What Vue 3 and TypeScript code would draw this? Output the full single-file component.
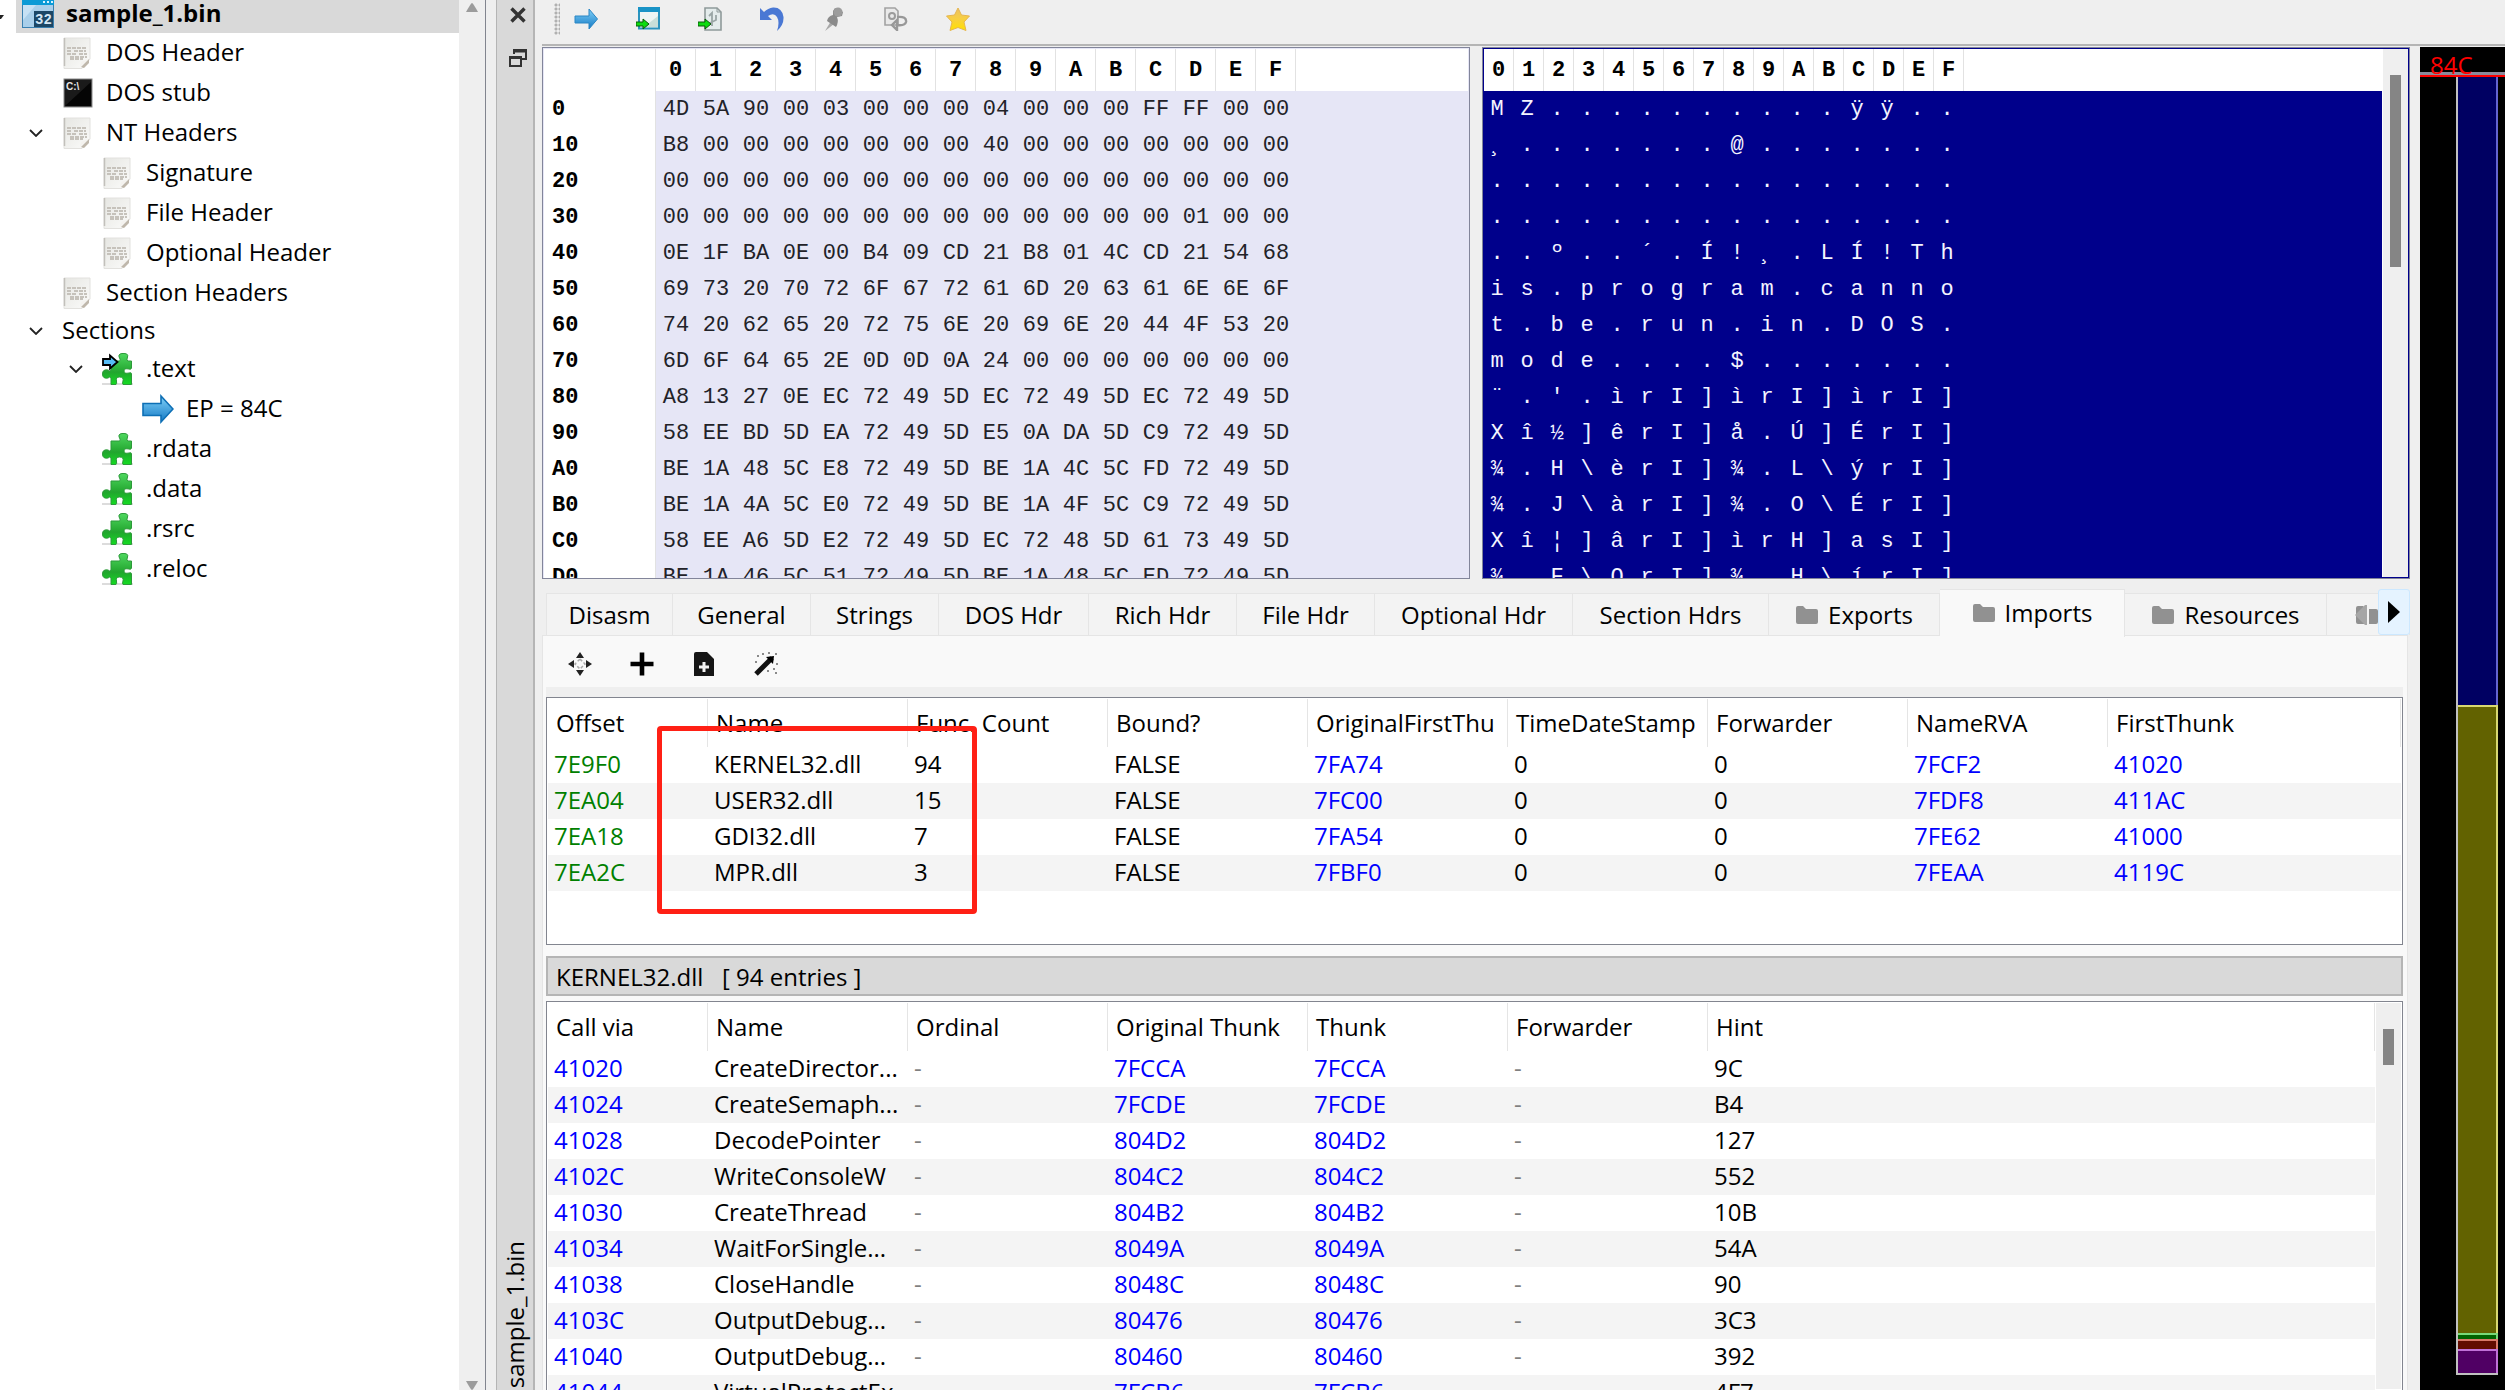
<script setup lang="ts">
interface TreeNode {
  label: string
  depth: number
  icon: 'app' | 'doc' | 'console' | 'puzzle' | 'entry' | 'arrow' | 'none'
  open?: boolean
}

const nodes: TreeNode[] = [
  { label: 'DOS Header', depth: 1, icon: 'doc' },
  { label: 'DOS stub', depth: 1, icon: 'console' },
  { label: 'NT Headers', depth: 1, icon: 'doc', open: true },
  { label: 'Signature', depth: 2, icon: 'doc' },
  { label: 'File Header', depth: 2, icon: 'doc' },
  { label: 'Optional Header', depth: 2, icon: 'doc' },
  { label: 'Section Headers', depth: 1, icon: 'doc' },
  { label: 'Sections', depth: 1, icon: 'none', open: true },
  { label: '.text', depth: 2, icon: 'entry', open: true },
  { label: 'EP = 84C', depth: 3, icon: 'arrow' },
  { label: '.rdata', depth: 2, icon: 'puzzle' },
  { label: '.data', depth: 2, icon: 'puzzle' },
  { label: '.rsrc', depth: 2, icon: 'puzzle' },
  { label: '.reloc', depth: 2, icon: 'puzzle' },
]

const digits: string[] = '0123456789ABCDEF'.split('')

const dump: string[][] = [
  '4D 5A 90 00 03 00 00 00 04 00 00 00 FF FF 00 00',
  'B8 00 00 00 00 00 00 00 40 00 00 00 00 00 00 00',
  '00 00 00 00 00 00 00 00 00 00 00 00 00 00 00 00',
  '00 00 00 00 00 00 00 00 00 00 00 00 00 01 00 00',
  '0E 1F BA 0E 00 B4 09 CD 21 B8 01 4C CD 21 54 68',
  '69 73 20 70 72 6F 67 72 61 6D 20 63 61 6E 6E 6F',
  '74 20 62 65 20 72 75 6E 20 69 6E 20 44 4F 53 20',
  '6D 6F 64 65 2E 0D 0D 0A 24 00 00 00 00 00 00 00',
  'A8 13 27 0E EC 72 49 5D EC 72 49 5D EC 72 49 5D',
  '58 EE BD 5D EA 72 49 5D E5 0A DA 5D C9 72 49 5D',
  'BE 1A 48 5C E8 72 49 5D BE 1A 4C 5C FD 72 49 5D',
  'BE 1A 4A 5C E0 72 49 5D BE 1A 4F 5C C9 72 49 5D',
  '58 EE A6 5D E2 72 49 5D EC 72 48 5D 61 73 49 5D',
  'BE 1A 46 5C 51 72 49 5D BE 1A 48 5C ED 72 49 5D',
].map((row) => row.split(' '))

const offsetOf = (row: number): string => (row * 16).toString(16).toUpperCase()

const toChar = (byte: string): string => {
  const code = parseInt(byte, 16)
  const printable = (code > 0x20 && code < 0x7f) || code > 0xa0
  return printable ? String.fromCharCode(code) : '.'
}

interface Tab {
  label: string
  width: number
  folder?: boolean
  active?: boolean
}

const tabs: Tab[] = [
  { label: 'Disasm', width: 127 },
  { label: 'General', width: 138 },
  { label: 'Strings', width: 128 },
  { label: 'DOS Hdr', width: 150 },
  { label: 'Rich Hdr', width: 148 },
  { label: 'File Hdr', width: 138 },
  { label: 'Optional Hdr', width: 198 },
  { label: 'Section Hdrs', width: 196 },
  { label: 'Exports', width: 171, folder: true },
  { label: 'Imports', width: 185, folder: true, active: true },
  { label: 'Resources', width: 202, folder: true },
]

const importHeads = ['Offset', 'Name', 'Func. Count', 'Bound?', 'OriginalFirstThu', 'TimeDateStamp', 'Forwarder', 'NameRVA', 'FirstThunk']
const importTones = ['green', '', '', '', 'blue', '', '', 'blue', 'blue']
const imports: string[][] = [
  ['7E9F0', 'KERNEL32.dll', '94', 'FALSE', '7FA74', '0', '0', '7FCF2', '41020'],
  ['7EA04', 'USER32.dll', '15', 'FALSE', '7FC00', '0', '0', '7FDF8', '411AC'],
  ['7EA18', 'GDI32.dll', '7', 'FALSE', '7FA54', '0', '0', '7FE62', '41000'],
  ['7EA2C', 'MPR.dll', '3', 'FALSE', '7FBF0', '0', '0', '7FEAA', '4119C'],
]

const entryHeads = ['Call via', 'Name', 'Ordinal', 'Original Thunk', 'Thunk', 'Forwarder', 'Hint']
const entryTones = ['blue', '', 'dash', 'blue', 'blue', 'dash', '']
const entries: string[][] = [
  ['41020', 'CreateDirector...', '7FCCA', '9C'],
  ['41024', 'CreateSemaph...', '7FCDE', 'B4'],
  ['41028', 'DecodePointer', '804D2', '127'],
  ['4102C', 'WriteConsoleW', '804C2', '552'],
  ['41030', 'CreateThread', '804B2', '10B'],
  ['41034', 'WaitForSingle...', '8049A', '54A'],
  ['41038', 'CloseHandle', '8048C', '90'],
  ['4103C', 'OutputDebug...', '80476', '3C3'],
  ['41040', 'OutputDebug...', '80460', '392'],
  ['41044', 'VirtualProtectEx', '7FCB6', '4F7'],
].map(([via, name, thunk, hint]) => [via, name, '-', thunk, thunk, '-', hint])

// relative heights, each without its 2px top edge
const segments = [
  { name: 'blue', size: 628 },
  { name: 'olive', size: 626 },
  { name: 'lime', size: 4 },
  { name: 'red', size: 8 },
  { name: 'purple', size: 22 },
]
</script>

<template>
  <div class="window">
    <svg class="defs" aria-hidden="true">
      <defs>
        <linearGradient id="g-arrow" x1="0" y1="0" x2="0" y2="1">
          <stop offset="0" stop-color="#7fd0f8" />
          <stop offset="1" stop-color="#1479c4" />
        </linearGradient>
        <linearGradient id="g-puzzle" x1="0" y1="0" x2="0" y2="1">
          <stop offset="0" stop-color="#4fd860" />
          <stop offset="0.6" stop-color="#22a52e" />
          <stop offset="1" stop-color="#14dc22" />
        </linearGradient>
        <linearGradient id="g-page" x1="0" y1="0" x2="1" y2="1">
          <stop offset="0" stop-color="#e6e6e2" />
          <stop offset="1" stop-color="#fbfbfa" />
        </linearGradient>
        <linearGradient id="g-star" x1="0" y1="0" x2="0" y2="1">
          <stop offset="0" stop-color="#ecc062" />
          <stop offset="0.5" stop-color="#f8d040" />
          <stop offset="1" stop-color="#ffe000" />
        </linearGradient>
        <symbol id="i-arrow" viewBox="0 0 32 28">
          <path d="M1 8.500H19V1L31 14 19 27V20.500H1Z" fill="url(#g-arrow)" stroke="#0d6fb5" stroke-width="1.600" />
        </symbol>
        <symbol id="i-puzzle" viewBox="0 0 32 32">
          <path d="M0 30H31V32H0Z" fill="#dcdcdc" />
          <path d="M9 8H17Q19 8 18 6Q15 1 20 0.500Q27 0 25.500 4Q24 8 26 8H29.500V15Q29 17 27 16Q22 15 22 18Q22 21 27 20Q29.500 19 29.500 21V31.500H21Q20 30 21 28Q22 24 17.500 24Q13.500 24 14.500 28Q15 31 14 31.500H9V25Q8 23 6 25Q0.500 26 0.500 21Q0.500 16 6 17Q8 19 9 17Z" fill="url(#g-puzzle)" stroke="#2d9a3a" stroke-width="1" />
        </symbol>
      </defs>
    </svg>

    <aside class="tree">
      <ul class="tree-list">
        <li class="node root">
          <svg class="root-tick" viewBox="0 0 4 6"><path d="M0 1H4L1 5H0Z" fill="#222" /></svg>
          <span class="root-body">
            <svg class="app-icon" viewBox="0 0 32 28">
              <rect x="0.500" y="-3" width="31" height="30.500" fill="#a9cfea" stroke="#3a80b0" />
              <path d="M1 5L14 5 1 20Z" fill="#c6e1f4" />
              <rect x="0" y="-3" width="32" height="8" fill="#0b9ad6" />
              <path d="M21 1H23V3H21ZM25 1H27V3H25ZM29 1H31V3H29Z" fill="#d8f2ff" />
              <rect x="12" y="11" width="19" height="16" fill="#1c4766" />
              <text x="13" y="24" font-family="Liberation Mono, monospace" font-weight="700" font-size="14" fill="#d4e6f4">32</text>
            </svg>
            <strong>sample_1.bin</strong>
          </span>
        </li>
        <li v-for="node in nodes" :key="node.label" class="node" :class="['depth-' + node.depth, { bare: node.icon === 'none' }]">
          <span class="twist">
            <svg v-if="node.open" viewBox="0 0 14 8"><path d="M1 1L7 7 13 1" fill="none" stroke="#222" stroke-width="1.800" /></svg>
          </span>
          <svg v-if="node.icon === 'doc'" class="node-icon" viewBox="0 0 32 32">
            <path d="M2 1H28V22L20 31.500H2Z" fill="url(#g-page)" stroke="#e2e1de" />
            <path d="M2.500 1V29" stroke="#c2c0bb" stroke-width="1.500" />
            <path d="M5 11H24M5 14H9M12 14H24M5 17H15M17 17H25M8 20H25M8 22H21" stroke="#c6c2bb" stroke-width="1.800" stroke-dasharray="4 1" />
            <path d="M19 30L27 22 27 26 22 31Z" fill="#bfb7ab" />
            <path d="M18 30L19 25 26 22Z" fill="#f4f2ee" />
          </svg>
          <svg v-else-if="node.icon === 'console'" class="node-icon" viewBox="0 0 32 32">
            <rect x="2" y="2" width="28" height="28" fill="#1a1a1a" stroke="#8a8a8a" />
            <path d="M29 5V29H3Z" fill="#050505" />
            <text x="4" y="13" font-family="Liberation Sans, sans-serif" font-weight="700" font-size="10" fill="#e6e6e6">C:\</text>
          </svg>
          <svg v-else-if="node.icon === 'puzzle'" class="node-icon"><use href="#i-puzzle" /></svg>
          <svg v-else-if="node.icon === 'entry'" class="node-icon" viewBox="0 0 32 32">
            <use href="#i-puzzle" />
            <path d="M1 6H8V2.500L15.500 9 8 15.500V12H1Z" fill="#57bdf6" stroke="#000" stroke-width="1.800" />
          </svg>
          <svg v-else-if="node.icon === 'arrow'" class="node-icon"><use href="#i-arrow" /></svg>
          <span class="node-label">{{ node.label }}</span>
        </li>
      </ul>
      <div class="tree-scroll">
        <svg viewBox="0 0 12 9"><path d="M6 0Q7 0 12 9H0Q5 0 6 0Z" fill="#9c9c9c" /></svg>
        <svg viewBox="0 0 12 9"><path d="M6 9Q5 9 0 0H12Q7 9 6 9Z" fill="#9c9c9c" /></svg>
      </div>
    </aside>

    <div class="dock">
      <button class="dock-button" aria-label="Close">
        <svg width="16" height="16" viewBox="0 0 16 16"><path d="M1.500 1.500L14.500 14.500M14.500 1.500L1.500 14.500" stroke="#333" stroke-width="3.400" /></svg>
      </button>
      <button class="dock-button" aria-label="Float">
        <svg width="18" height="18" viewBox="0 0 18 18"><path d="M5 5V1H17V10H12" fill="none" stroke="#333" stroke-width="2" /><path d="M5 2H17" stroke="#333" stroke-width="3" /><path d="M1 8H12V17H1Z" fill="#dadada" stroke="#333" stroke-width="2" /><path d="M1 8.500H12" stroke="#333" stroke-width="3" /></svg>
      </button>
      <span class="dock-title">sample_1.bin</span>
    </div>

    <main class="main">
      <div class="toolbar">
        <span class="grip"></span>
        <button aria-label="Go to"><svg viewBox="0 0 24 24"><path d="M1 9H15V2L23.500 12 15 22V16H1Z" fill="url(#g-arrow)" stroke="#2a86c4" /></svg></button>
        <button aria-label="Load file">
          <svg viewBox="0 0 24 24"><rect x="3" y="1.500" width="20" height="20" fill="#eef5f3" stroke="#2c93bd" stroke-width="2" /><rect x="2" y="0" width="22" height="5" fill="#1993c6" /><path d="M8 20L22 9V20Z" fill="#c9dfd9" /><path d="M0 15H7V12L13 17 7 22V19H0Z" fill="#0ddc10" stroke="#0a5a0a" /></svg>
        </button>
        <button aria-label="Save page">
          <svg viewBox="0 0 24 24"><path d="M7 1H19L23 5V23H7Z" fill="#e4ecec" stroke="#8f9a9a" stroke-width="1.600" /><path d="M11 9L14 6V19M18 8V13L12 16" fill="none" stroke="#9aa6a6" stroke-width="1.800" /><path d="M19 1V5H23" fill="none" stroke="#8f9a9a" /><path d="M0 15H7V12L13 17 7 22V19H0Z" fill="#0ddc10" stroke="#0a5a0a" /></svg>
        </button>
        <button aria-label="Undo"><svg viewBox="0 0 24 24"><path d="M0 1V13H12L8 9Q14 5 17 10Q20 15 17 24Q24 18 23.500 10Q22 0 13 0.500Q8 1 4 5Z" fill="#4a78d4" /></svg></button>
        <button aria-label="Pin"><svg viewBox="0 0 24 24"><path d="M3 24L9 14 12 17Z" fill="#a9a9a9" /><path d="M13 1L21 5 20 9 15 10Q17 15 14 20L5 14Q6 9 11 8L11 4Z" fill="#8b8b8b" /><circle cx="16" cy="5" r="4.500" fill="#9c9c9c" /></svg></button>
        <button aria-label="Copy"><svg viewBox="0 0 24 24"><path d="M1 1H11L14 4V18H1Z" fill="#e9e9e9" stroke="#a2a2a2" stroke-width="1.600" /><circle cx="8" cy="9" r="3" fill="none" stroke="#9b9b9b" stroke-width="2" /><path d="M13 10Q23 9 22 15Q21 19 13 18M13 13L8 18 13 23Z" fill="none" stroke="#989898" stroke-width="2.400" /></svg></button>
        <button aria-label="Favourite"><svg viewBox="0 0 24 24"><path d="M12 1L15.500 8 23.500 9 18 15 20 23.500 12 20.500 4 23.500 6 15 0.500 9 8.500 8Z" fill="url(#g-star)" stroke="#e5b650" /></svg></button>
      </div>

      <div class="work">
        <div class="center">
          <div class="dumps">
            <section class="pane hex">
              <table class="hex-table">
                <thead>
                  <tr><th class="offset"></th><th v-for="d in digits" :key="d" class="digit">{{ d }}</th><th></th></tr>
                </thead>
                <tbody>
                  <tr v-for="(row, r) in dump" :key="r">
                    <th class="offset">{{ offsetOf(r) }}</th>
                    <td v-for="(byte, c) in row" :key="c">{{ byte }}</td>
                    <td></td>
                  </tr>
                </tbody>
              </table>
            </section>
            <section class="pane ascii">
              <table class="ascii-table">
                <thead>
                  <tr><th v-for="d in digits" :key="d" class="digit">{{ d }}</th><th></th></tr>
                </thead>
                <tbody>
                  <tr v-for="(row, r) in dump" :key="r">
                    <td v-for="(byte, c) in row" :key="c">{{ toChar(byte) }}</td>
                    <td></td>
                  </tr>
                </tbody>
              </table>
              <div class="scroll"><span class="thumb tall"></span></div>
            </section>
          </div>

          <div class="tabs">
            <button v-for="tab in tabs" :key="tab.label" class="tab" :class="{ active: tab.active }" :style="{ width: tab.width + 'px' }">
              <svg v-if="tab.folder" class="folder" viewBox="0 0 24 20"><path d="M1 3Q1 1 3 1H8L11 4H21Q23 4 23 6V17Q23 19 21 19H3Q1 19 1 17Z" fill="#919191" /></svg>
              {{ tab.label }}
            </button>
            <span class="tab cut">
              <svg class="folder" viewBox="0 0 24 20"><path d="M1 3Q1 1 3 1H8L11 4H21Q23 4 23 6V17Q23 19 21 19H3Q1 19 1 17Z" fill="#919191" /><path d="M13 -1V21H11L0 10 11 -1Z" fill="#a6a6a6" /><path d="M13 0V20" stroke="#f3f3f3" stroke-width="2" /></svg>
            </span>
            <button class="tab-next" aria-label="More tabs"><svg width="12" height="22" viewBox="0 0 12 22"><path d="M0 0L12 11 0 22Z" fill="#000" /></svg></button>
          </div>

          <section class="sheet">
            <div class="tools">
              <button aria-label="Expand"><svg viewBox="0 0 24 24"><path d="M12 0L16 6H8ZM12 24L8 18H16ZM0 12L6 8V16ZM24 12L18 16V8Z" fill="#222" /><path d="M12 7L17 12 12 17 7 12Z" fill="none" stroke="#aaa" stroke-width="1.500" stroke-dasharray="3 2" /></svg></button>
              <button aria-label="Add"><svg viewBox="0 0 24 24"><path d="M12 0.500V23.500M0.500 12H23.500" stroke="#000" stroke-width="4.600" /></svg></button>
              <button aria-label="Add file"><svg viewBox="0 0 24 24"><path d="M2 2Q2 0 4 0H15L22 7V24H2Z" fill="#161616" /><path d="M12 10V20M7 15H17" stroke="#f4f4f4" stroke-width="3" /></svg></button>
              <button aria-label="Auto add"><svg viewBox="0 0 24 24"><path d="M2 22L18 6" stroke="#111" stroke-width="5" /><path d="M12 5L20 4 19 12Z" fill="#000" /><path d="M4 3V5M9 1V3M15 0V2M22 1V3M23 11V13M20 16V18M14 18V20M22 20V22M2 9V11" stroke="#8a8a8a" stroke-width="2" /></svg></button>
            </div>

            <div class="grid-box imports">
              <table class="data">
                <colgroup><col class="first" /><col v-for="n in 7" :key="n" class="mid" /><col /></colgroup>
                <thead><tr><th v-for="h in importHeads" :key="h">{{ h }}</th></tr></thead>
                <tbody>
                  <tr v-for="row in imports" :key="row[0]">
                    <td v-for="(cell, c) in row" :key="c" :class="importTones[c]">{{ cell }}</td>
                  </tr>
                </tbody>
              </table>
              <span class="marker"></span>
            </div>

            <div class="caption">KERNEL32.dll&nbsp;&nbsp;&nbsp;[ 94 entries ]</div>

            <div class="grid-box entries">
              <table class="data">
                <colgroup><col class="first" /><col v-for="n in 5" :key="n" class="mid" /><col /></colgroup>
                <thead><tr><th v-for="h in entryHeads" :key="h">{{ h }}</th></tr></thead>
                <tbody>
                  <tr v-for="row in entries" :key="row[0]">
                    <td v-for="(cell, c) in row" :key="c" :class="entryTones[c]">{{ cell }}</td>
                  </tr>
                </tbody>
              </table>
              <div class="scroll"><span class="thumb short"></span></div>
            </div>
          </section>
        </div>

        <aside class="map">
          <div class="map-label"><span>84C</span></div>
          <div class="map-bar">
            <div v-for="s in segments" :key="s.name" class="segment" :class="s.name" :style="{ flexGrow: s.size }"></div>
          </div>
        </aside>
      </div>
    </main>
  </div>
</template>

<style>
body {
  margin: 0;
  overflow: hidden;
}
</style>

<style scoped>
* {
  box-sizing: border-box;
}
.window {
  display: flex;
  height: 100vh;
  overflow: hidden;
  background: #efefef;
  color: #000;
  font-family: "Open Sans", "Noto Sans", sans-serif;
  font-size: 24px;
  line-height: 36px;
}
.defs {
  position: absolute;
  width: 0;
  height: 0;
}
button {
  padding: 0;
  border: 0;
  background: none;
  color: inherit;
  font: inherit;
}
svg {
  display: block;
}

/* section tree */
.tree {
  display: flex;
  flex: none;
  width: 486px;
  border-right: 1px solid #82858f;
  background: #fff;
}
.tree-list {
  flex: 1;
  margin: 0;
  padding: 0;
  list-style: none;
}
.node {
  display: flex;
  align-items: center;
  height: 40px;
  white-space: nowrap;
}
.node.bare {
  height: 36px;
}
.node-label {
  padding-bottom: 2px;
}
.root {
  height: 33px;
}
.root-tick {
  width: 4px;
  height: 6px;
  margin-right: 12px;
}
.root-body {
  display: flex;
  flex: 1;
  align-items: flex-start;
  height: 33px;
  padding-left: 6px;
  background: #d9d9d9;
}
.root-body strong {
  line-height: 25px;
}
.app-icon {
  width: 32px;
  height: 28px;
  margin-right: 12px;
}
.twist {
  flex: none;
  width: 14px;
  margin-right: 19px;
}
.twist svg {
  width: 14px;
  height: 8px;
}
.depth-1 {
  padding-left: 29px;
}
.depth-2 {
  padding-left: 69px;
}
.depth-3 {
  padding-left: 109px;
}
.node-icon {
  flex: none;
  width: 32px;
  height: 32px;
  margin-right: 12px;
}
.tree-scroll {
  display: flex;
  flex-direction: column;
  align-items: center;
  justify-content: space-between;
  width: 26px;
  padding: 3px 0 0;
  background: #efefef;
}
.tree-scroll svg {
  width: 12px;
  height: 9px;
}

/* vertical dock title */
.dock {
  display: flex;
  flex: none;
  flex-direction: column;
  align-items: center;
  width: 39px;
  margin-left: 10px;
  padding: 7px 0 2px 6px;
  border-right: 2px solid #b5b5b5;
  border-left: 1px solid #b5b5b5;
  background: #d9d9d9;
}
.dock-button {
  margin-bottom: 26px;
}
.dock-title {
  margin-top: auto;
  margin-right: 6px;
  line-height: 32px;
  writing-mode: vertical-rl;
  transform: rotate(180deg);
}

.main {
  display: flex;
  flex: 1;
  flex-direction: column;
  min-width: 0;
  margin-left: 7px;
}
.toolbar {
  display: flex;
  flex: none;
  align-items: center;
  gap: 38px;
  height: 46px;
  padding: 0 0 6px 12px;
  border-bottom: 2px solid #b5b5b5;
}
.grip {
  width: 6px;
  height: 32px;
  margin-right: -24px;
  background: radial-gradient(circle, #b0b0b0 1px, #efefef 2px) 0 0 / 4px 4px;
}
.toolbar svg,
.tools svg {
  width: 24px;
  height: 24px;
}
.work {
  display: flex;
  flex: 1;
  min-height: 0;
  padding-top: 1px;
}
.center {
  display: flex;
  flex: 1;
  flex-direction: column;
  min-width: 0;
}

/* hex and text dumps */
.dumps {
  display: flex;
  flex: none;
  gap: 12px;
  height: 532px;
  margin-right: 10px;
}
.pane {
  display: flex;
  flex: 1;
  min-width: 0;
  overflow: hidden;
  border: 1px solid #82859a;
  font-family: "Liberation Mono", monospace;
  font-size: 22px;
}
.pane table {
  width: 100%;
  height: 0;
  border-collapse: separate;
  border-spacing: 0;
  table-layout: fixed;
}
.pane th,
.pane td {
  height: 36px;
  padding: 2px 0 0;
  line-height: 34px;
  text-align: center;
}
.pane thead th {
  height: 42px;
  background: #fff;
}
.pane thead .digit {
  border-right: 1px solid #e2e2e2;
}
.hex {
  padding: 1px;
  background: #e6e6f6;
}
.hex td {
  color: #222228;
}
.hex-table .offset {
  width: 112px;
  padding-left: 8px;
  border-right: 1px solid #e2e2e2;
  background: #fff;
  text-align: left;
}
.hex-table .digit {
  width: 40px;
}
.ascii {
  padding: 1px;
  background: #00008b;
}
.ascii-table .digit {
  width: 30px;
}
.ascii-table td {
  padding-right: 4px;
  color: #f4f4ff;
}
.scroll {
  flex: none;
  width: 26px;
  border-left: 1px solid #fff;
  background: #efefef;
}
.thumb {
  display: block;
  width: 11px;
  margin: 26px auto 0;
  background: #858585;
}
.tall {
  height: 192px;
}
.short {
  height: 36px;
}

/* tab row */
.tabs {
  position: relative;
  display: flex;
  flex: none;
  align-items: flex-end;
  height: 46px;
  margin: 10px 10px 0 0;
  padding-left: 4px;
  overflow: visible;
}
.tab {
  display: flex;
  flex: none;
  align-items: center;
  justify-content: center;
  height: 42px;
  border: 1px solid #e5e5e5;
  border-width: 1px 1px 0 0;
  background: #f3f3f3;
  white-space: nowrap;
}
.tab:first-child {
  border-left-width: 1px;
}
.tab.active {
  z-index: 1;
  height: 48px;
  margin-bottom: -2px;
  padding-bottom: 2px;
  background: #f9f9f9;
}
.tab.cut {
  flex: 1;
  justify-content: flex-start;
  padding-left: 28px;
}
.folder {
  width: 24px;
  height: 20px;
  margin-right: 9px;
}
.tab-next {
  position: absolute;
  top: 0;
  right: 0;
  display: flex;
  align-items: center;
  justify-content: center;
  width: 32px;
  height: 46px;
  border: 1px solid #cce8ff;
  border-radius: 3px;
  background: #e5f3ff;
}

/* imports sheet */
.sheet {
  display: flex;
  flex: 1;
  flex-direction: column;
  min-height: 0;
  margin-right: 12px;
  padding: 0 4px 0 3px;
  border: 1px solid #e5e5e5;
  border-bottom: 0;
  background: #f9f9f9;
}
.tools {
  display: flex;
  flex: none;
  align-items: center;
  gap: 38px;
  height: 61px;
  padding: 4px 0 0 22px;
  border-bottom: 10px solid #efefef;
}
.grid-box {
  position: relative;
  display: flex;
  align-items: flex-start;
  padding: 1px;
  border: 1px solid #82858f;
  background: #fff;
}
.imports {
  flex: none;
  height: 248px;
}
.entries {
  flex: 1;
  align-items: stretch;
  min-height: 0;
  margin-top: 5px;
  overflow: hidden;
  border-bottom: 0;
}
.data {
  flex: 1;
  height: 0;
  border-collapse: separate;
  border-spacing: 0;
  table-layout: fixed;
}
.data .first {
  width: 160px;
}
.data .mid {
  width: 200px;
}
.data th {
  height: 48px;
  padding: 0 8px;
  overflow: hidden;
  border-right: 1px solid #e5e5e5;
  font-weight: 400;
  text-align: left;
  white-space: nowrap;
}
.data td {
  height: 36px;
  padding: 0 6px 2px;
  overflow: hidden;
  line-height: 34px;
  white-space: nowrap;
}
.data tbody tr:nth-child(even) {
  background: #f4f4f4;
}
.green {
  color: #008000;
}
td.blue {
  color: #0000ff;
}
.dash {
  color: #808080;
}
.marker {
  position: absolute;
  top: 28px;
  left: 110px;
  width: 320px;
  height: 188px;
  border: 5px solid #ff2015;
  border-radius: 4px;
}
.caption {
  flex: none;
  height: 40px;
  margin-top: 11px;
  padding-left: 8px;
  border: 2px solid #b5b5b5;
  background: #d9d9d9;
  line-height: 38px;
}

/* section map */
.map {
  display: flex;
  flex: none;
  flex-direction: column;
  width: 85px;
  padding-bottom: 15px;
  background: #000;
}
.map-label {
  flex: none;
  height: 30px;
  padding-left: 10px;
  overflow: hidden;
  border-bottom: 2px solid #ff0000;
  color: #ff0000;
  line-height: 36px;
  box-shadow: inset 0 -3px 0 #8a8a9a;
}
.map-bar {
  display: flex;
  flex: 1;
  flex-direction: column;
  width: 42px;
  margin-left: 36px;
  border-bottom: 2px solid #c0c0c0;
  border-left: 2px solid #c0c0c0;
}
.segment {
  flex-basis: 0;
  border-top: 2px solid;
  border-right: 2px solid;
}
.segment.blue {
  border-top: 0;
  border-color: #6464d0;
  background: #000062;
}
.olive {
  border-color: #d8d870;
  background: #626200;
}
.lime {
  border-color: #78d878;
  background: #006200;
}
.segment.red {
  border-color: #d87868;
  background: #620c00;
}
.purple {
  border-color: #c070d8;
  background: #500064;
}
</style>
